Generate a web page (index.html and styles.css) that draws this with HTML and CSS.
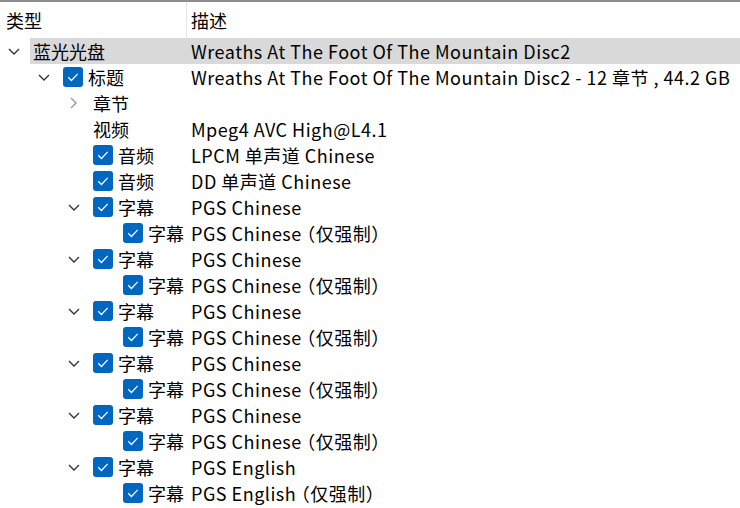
FILE: index.html
```html
<!DOCTYPE html>
<html lang="zh-CN">
<head>
  <meta charset="UTF-8">
  <title>蓝光光盘</title>
  <link rel="stylesheet" href="styles.css">
</head>
<body>
  <div class="tree">
    <div class="header">
      <div class="col-name">类型</div>
      <div class="col-desc">描述</div>
    </div>

    <div class="row l0">
      <span class="exp"><svg class="down" viewBox="0 0 12 7"><path d="M1 1l5 5 5-5"/></svg></span>
      <div class="item selected">
        <span class="name">蓝光光盘</span>
        <span class="desc">Wreaths At The Foot Of The Mountain Disc2</span>
      </div>
    </div>

    <div class="row l1">
      <span class="exp"><svg class="down" viewBox="0 0 12 7"><path d="M1 1l5 5 5-5"/></svg></span>
      <div class="item">
        <span class="name"><span class="cb"><svg viewBox="0 0 19 19"><path d="M5 9.8l3 3 6-6.3"/></svg></span>标题</span>
        <span class="desc">Wreaths At The Foot Of The Mountain Disc2 - 12 章节 , 44.2 GB</span>
      </div>
    </div>

    <div class="row l2">
      <span class="exp"><svg class="right" viewBox="0 0 7 12"><path d="M1 1l5 5-5 5"/></svg></span>
      <div class="item">
        <span class="name">章节</span>
        <span class="desc"></span>
      </div>
    </div>

    <div class="row l2">
      <span class="exp"></span>
      <div class="item">
        <span class="name">视频</span>
        <span class="desc">Mpeg4 AVC High@L4.1</span>
      </div>
    </div>

    <div class="row l2">
      <span class="exp"></span>
      <div class="item">
        <span class="name"><span class="cb"><svg viewBox="0 0 19 19"><path d="M5 9.8l3 3 6-6.3"/></svg></span>音频</span>
        <span class="desc">LPCM 单声道 Chinese</span>
      </div>
    </div>

    <div class="row l2">
      <span class="exp"></span>
      <div class="item">
        <span class="name"><span class="cb"><svg viewBox="0 0 19 19"><path d="M5 9.8l3 3 6-6.3"/></svg></span>音频</span>
        <span class="desc">DD 单声道 Chinese</span>
      </div>
    </div>

    <div id="subs"></div>
  </div>

  <script>
    const subs = ['Chinese', 'Chinese', 'Chinese', 'Chinese', 'Chinese', 'English'];
    const check = '<span class="cb"><svg viewBox="0 0 19 19"><path d="M5 9.8l3 3 6-6.3"/></svg></span>';
    const down = '<svg class="down" viewBox="0 0 12 7"><path d="M1 1l5 5 5-5"/></svg>';

    let html = '';
    subs.forEach(lang => {
      html += `<div class="row l2">
        <span class="exp">${down}</span>
        <div class="item"><span class="name">${check}字幕</span><span class="desc">PGS ${lang}</span></div>
      </div>
      <div class="row l3">
        <span class="exp"></span>
        <div class="item"><span class="name">${check}字幕</span><span class="desc">PGS ${lang} （仅强制）</span></div>
      </div>`;
    });
    document.getElementById('subs').innerHTML = html;
  </script>
</body>
</html>
```

FILE: styles.css
```css
body {
  margin: 0;
  background-color: #ffffff;
  color: #000000;
  font-family: "Noto Sans CJK SC", "Noto Sans", sans-serif;
  font-size: 18px;
  overflow: hidden;
}
.tree {
  border-top: 2px solid #8c8c8c;
  width: 740px;
}
.header {
  display: flex;
  height: 36px;
}
.header .col-name {
  width: 180px;
  padding-left: 6px;
  border-right: 1px solid #e5e5e5;
  line-height: 36px;
}
.header .col-desc {
  padding-left: 4px;
  line-height: 36px;
}
.row {
  display: flex;
  height: 26px;
}
.row.l1 { padding-left: 30px; }
.row.l2 { padding-left: 60px; }
.row.l3 { padding-left: 90px; }
.exp {
  width: 30px;
  flex: none;
  display: flex;
  align-items: center;
  justify-content: center;
}
.exp svg {
  fill: none;
  stroke-width: 1.4;
}
.exp .down {
  width: 12px;
  height: 7px;
  stroke: #333333;
  margin-left: -3px;
}
.exp .right {
  width: 7px;
  height: 12px;
  stroke: #9a9a9a;
  margin-left: -4px;
}
.item {
  flex: 1;
  display: flex;
  align-items: center;
  padding-left: 3px;
  white-space: nowrap;
}
.item.selected {
  background-color: #d9d9d9;
}
.name {
  display: flex;
  align-items: center;
  flex: none;
}
.l0 .name { width: 154px; }
.l1 .name { width: 124px; }
.l2 .name { width: 94px; }
.l3 .name { width: 64px; }
.desc {
  padding-left: 4px;
  letter-spacing: 0.5px;
  font-feature-settings: "halt";
  white-space: pre;
}
.cb {
  width: 20px;
  height: 20px;
  flex: none;
  margin-right: 5px;
  border-radius: 3px;
  background-color: #0067c0;
  display: flex;
}
.cb svg {
  width: 20px;
  height: 20px;
  fill: none;
  stroke: #ffffff;
  stroke-width: 1.2;
}
```
